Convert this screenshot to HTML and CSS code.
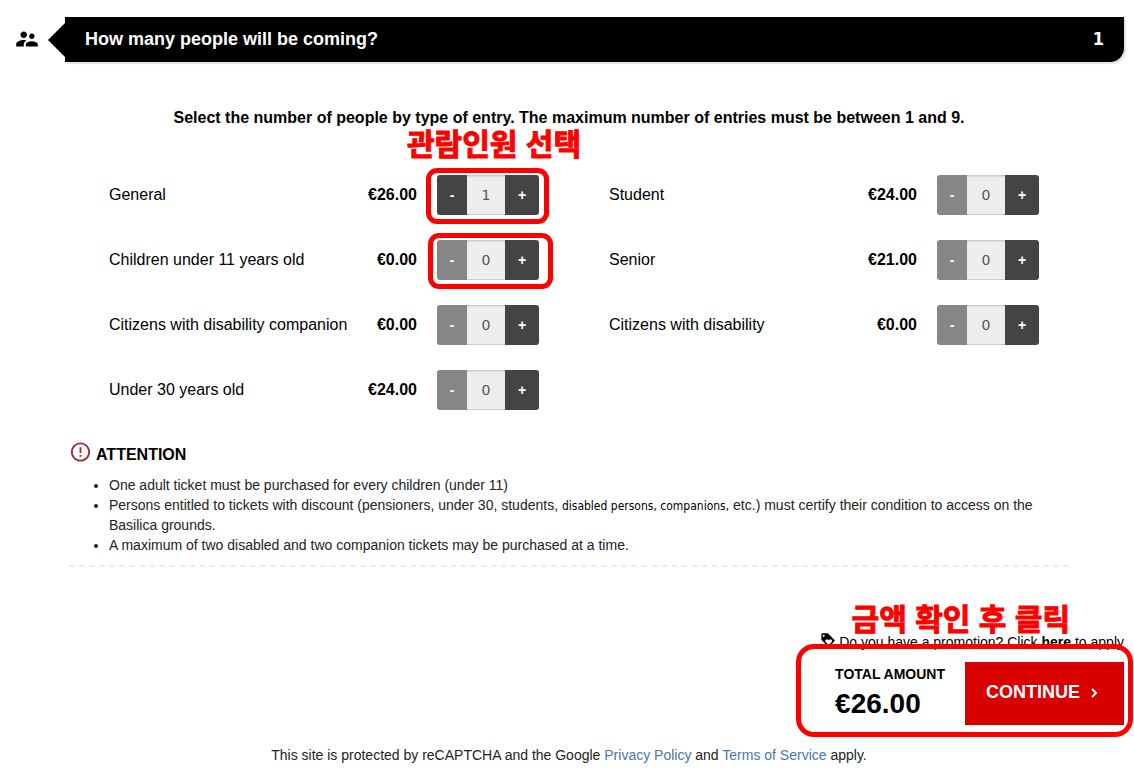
FILE: index.html
```html
<!DOCTYPE html>
<html lang="en">
<head>
    <meta charset="UTF-8">
    <meta name="viewport" content="width=device-width, initial-scale=1.0">
    <title>Tickets - How many people will be coming?</title>
    <link rel="stylesheet" href="styles.css">
</head>
<body>
    <main class="page">
        <header class="step">
            <svg class="step-icon" viewBox="0 0 24 24" aria-hidden="true">
                <path d="M16.5 12c1.38 0 2.49-1.12 2.49-2.5S17.88 7 16.5 7C15.12 7 14 8.12 14 9.5s1.12 2.5 2.5 2.5zM9 11c1.66 0 2.99-1.34 2.99-3S10.66 5 9 5C7.34 5 6 6.34 6 8s1.34 3 3 3zm7.5 3c-1.83 0-5.5.92-5.5 2.75V19h11v-2.25c0-1.83-3.67-2.75-5.5-2.75zM9 13c-2.33 0-7 1.17-7 3.5V19h7v-2.25c0-.85.33-2.34 2.37-3.47C10.5 13.1 9.66 13 9 13z"/>
            </svg>
            <span class="step-arrow"></span>
            <div class="step-bar">
                <h1>How many people will be coming?</h1>
                <span class="step-count">1</span>
            </div>
        </header>

        <section class="content">
            <div class="intro">
                <p>Select the number of people by type of entry. The maximum number of entries must be between 1 and 9.</p>
                <span class="note note-people" lang="ko">관람인원 선택</span>
            </div>

            <form class="tickets">
                <div class="ticket">
                    <label for="general">General</label>
                    <span class="price">€26.00</span>
                    <div class="stepper marked">
                        <button type="button">-</button>
                        <input type="text" id="general" value="1">
                        <button type="button">+</button>
                    </div>
                </div>
                <div class="ticket">
                    <label for="student">Student</label>
                    <span class="price">€24.00</span>
                    <div class="stepper">
                        <button type="button" disabled>-</button>
                        <input type="text" id="student" value="0">
                        <button type="button">+</button>
                    </div>
                </div>
                <div class="ticket">
                    <label for="children">Children under 11 years old</label>
                    <span class="price">€0.00</span>
                    <div class="stepper marked marked-wide">
                        <button type="button" disabled>-</button>
                        <input type="text" id="children" value="0">
                        <button type="button">+</button>
                    </div>
                </div>
                <div class="ticket">
                    <label for="senior">Senior</label>
                    <span class="price">€21.00</span>
                    <div class="stepper">
                        <button type="button" disabled>-</button>
                        <input type="text" id="senior" value="0">
                        <button type="button">+</button>
                    </div>
                </div>
                <div class="ticket">
                    <label for="companion">Citizens with disability companion</label>
                    <span class="price">€0.00</span>
                    <div class="stepper">
                        <button type="button" disabled>-</button>
                        <input type="text" id="companion" value="0">
                        <button type="button">+</button>
                    </div>
                </div>
                <div class="ticket">
                    <label for="disability">Citizens with disability</label>
                    <span class="price">€0.00</span>
                    <div class="stepper">
                        <button type="button" disabled>-</button>
                        <input type="text" id="disability" value="0">
                        <button type="button">+</button>
                    </div>
                </div>
                <div class="ticket">
                    <label for="under30">Under 30 years old</label>
                    <span class="price">€24.00</span>
                    <div class="stepper">
                        <button type="button" disabled>-</button>
                        <input type="text" id="under30" value="0">
                        <button type="button">+</button>
                    </div>
                </div>
            </form>

            <div class="attention">
                <h2>
                    <svg viewBox="0 0 24 24" aria-hidden="true">
                        <path d="M11 15h2v2h-2zm0-8h2v6h-2zm.99-5C6.47 2 2 6.48 2 12s4.47 10 9.99 10C17.52 22 22 17.52 22 12S17.52 2 11.99 2zM12 20c-4.42 0-8-3.58-8-8s3.58-8 8-8 8 3.58 8 8-3.58 8-8 8z"/>
                    </svg>
                    ATTENTION
                </h2>
                <ul>
                    <li>One adult ticket must be purchased for every children (under 11)</li>
                    <li>Persons entitled to tickets with discount (pensioners, under 30, students, <span class="alt">disabled persons, companions,</span> etc.) must certify their condition to access on the Basilica grounds.</li>
                    <li>A maximum of two disabled and two companion tickets may be purchased at a time.</li>
                </ul>
            </div>
        </section>

        <section class="checkout">
            <span class="note note-total" lang="ko">금액 확인 후 클릭</span>
            <p class="promo">
                <svg viewBox="0 0 24 24" aria-hidden="true">
                    <path d="M21.41 11.58l-9-9C12.05 2.22 11.55 2 11 2H4c-1.1 0-2 .9-2 2v7c0 .55.22 1.05.59 1.42l9 9c.36.36.86.58 1.41.58s1.05-.22 1.41-.59l7-7c.37-.36.59-.86.59-1.41s-.23-1.06-.59-1.42zM5.5 7C4.67 7 4 6.33 4 5.5S4.67 4 5.5 4 7 4.67 7 5.5 6.33 7 5.5 7zm11.77 8.27L13 19.54l-4.27-4.27C8.28 14.81 8 14.19 8 13.5c0-1.38 1.12-2.5 2.5-2.5.69 0 1.32.28 1.77.74l.73.72.73-.73c.45-.45 1.08-.73 1.77-.73 1.38 0 2.5 1.12 2.5 2.5 0 .69-.28 1.32-.73 1.77z"/>
                </svg>
                <span>Do you have a promotion? Click <a href="#">here</a> to apply</span>
            </p>
            <div class="summary">
                <div class="total">
                    <span class="total-label">TOTAL AMOUNT</span>
                    <strong>€26.00</strong>
                </div>
                <button type="button" class="continue">
                    CONTINUE
                    <svg viewBox="0 0 8 12" aria-hidden="true"><path d="M2 2l4 4-4 4"/></svg>
                </button>
            </div>
        </section>

        <footer>This site is protected by reCAPTCHA and the Google <a href="#">Privacy Policy</a> and <a href="#">Terms of Service</a> apply.</footer>
    </main>
</body>
</html>
```
FILE: styles.css
```css
* {
    box-sizing: border-box;
}
body {
    margin: 0;
    background: #fff;
    color: #000;
    font-family: "Liberation Sans", Arial, sans-serif;
    font-size: 16px;
    line-height: 20px;
}
h1, h2, p, ul {
    margin: 0;
}
.page {
    padding: 17px 10px 0 14px;
}

/* Step header */
.step {
    display: flex;
    align-items: center;
}
.step-icon {
    width: 26px;
    height: 26px;
    margin: 0 8px 2px 0;
}
.step-arrow {
    border: 17px solid transparent;
    border-left: 0;
    border-right-color: #000;
}
.step-bar {
    flex: 1;
    display: flex;
    justify-content: space-between;
    align-items: center;
    height: 45px;
    padding: 0 20px 2px;
    background: #000;
    color: #fff;
    border-radius: 0 0 14px 0;
    box-shadow: 2px 2px 1px #e4e4e4;
}
.step-bar h1 {
    font-size: 18px;
}
.step-count {
    font: bold 18px/20px "DejaVu Sans Condensed", "DejaVu Sans", sans-serif;
}

.content {
    max-width: 1000px;
    margin: 46px auto 0;
    border-bottom: 2px dashed #ececec;
}
.intro {
    position: relative;
    text-align: center;
    font-weight: bold;
}

/* Red hand-made notes over the form */
.note {
    position: absolute;
    color: #f00;
    font: bold 30px/36px "Noto Sans CJK KR", sans-serif;
    -webkit-text-stroke: 1px #f00;
    white-space: nowrap;
}
.note-people {
    top: 16px;
    left: 338px;
}
.note-total {
    top: -33px;
    right: 54px;
}

/* Ticket types */
.tickets {
    display: grid;
    grid-template-columns: 1fr 1fr;
    gap: 25px 70px;
    padding: 47px 30px 0 40px;
}
.ticket {
    display: flex;
    align-items: center;
}
.ticket label {
    flex: 1;
}
.price {
    margin-right: 20px;
    font-weight: bold;
}
.stepper {
    position: relative;
    display: flex;
    width: 102px;
    height: 40px;
}
.stepper button {
    width: 30px;
    padding: 0;
    border: 0;
    border-radius: 3px 0 0 3px;
    background: #444;
    color: #fff;
    font: bold 14px "Liberation Sans", sans-serif;
}
.stepper button:last-child {
    width: 34px;
    border-radius: 0 3px 3px 0;
}
.stepper button:disabled {
    background: #868686;
}
.stepper input {
    width: 38px;
    padding: 0;
    border: 1px solid #ccc;
    border-width: 1px 0;
    border-radius: 0;
    background: #eee;
    box-shadow: inset 0 1px 1px rgba(0, 0, 0, 0.08);
    color: #555;
    font: 14px "DejaVu Sans", sans-serif;
    text-align: center;
}
.marked::after {
    content: "";
    position: absolute;
    inset: -7px -10px -9px -11px;
    border: 5px solid #f00;
    border-radius: 11px;
    pointer-events: none;
}
.marked-wide::after {
    inset: -7px -14px -9px -9px;
}

/* Attention */
.attention {
    padding: 30px 20px 10px 0;
}
.attention h2 {
    display: flex;
    align-items: center;
    gap: 4px;
    font-size: 16px;
}
.attention svg {
    width: 23px;
    height: 24px;
    margin-bottom: 6px;
    fill: #a02c35;
}
.attention ul {
    margin-top: 5px;
    padding-left: 40px;
    font-size: 14px;
    color: #222;
}
.alt {
    font: 12px/16px "DejaVu Sans Condensed", "DejaVu Sans", sans-serif;
    color: #000;
}

/* Promotion and total */
.checkout {
    position: relative;
    margin-top: 65px;
}
.promo {
    display: flex;
    justify-content: flex-end;
    gap: 3px;
    font-size: 14px;
}
.promo svg {
    width: 16px;
    height: 16px;
}
.promo a {
    color: #000;
    font-weight: bold;
}
.summary {
    position: relative;
    display: flex;
    justify-content: flex-end;
    gap: 20px;
    margin-top: 10px;
}
.summary::after {
    content: "";
    position: absolute;
    inset: -18px -9px -12px auto;
    width: 327px;
    border: 5px solid #f00;
    border-radius: 18px;
    pointer-events: none;
}
.total-label {
    display: block;
    margin: 2px 0 6px;
    font-size: 14px;
    font-weight: bold;
}
.total strong {
    font-size: 28px;
    line-height: 28px;
}
.continue {
    display: flex;
    align-items: center;
    justify-content: center;
    gap: 10px;
    width: 159px;
    height: 63px;
    padding: 0 5px 2px 0;
    border: 0;
    background: #d90000;
    color: #fff;
    font: bold 18px "Liberation Sans", sans-serif;
}
.continue svg {
    width: 8px;
    height: 12px;
    fill: none;
    stroke: #fff;
    stroke-width: 2;
}

footer {
    margin-top: 20px;
    text-align: center;
    font-size: 14px;
    color: #222;
}
footer a {
    color: #4a76a8;
    text-decoration: none;
}
```
